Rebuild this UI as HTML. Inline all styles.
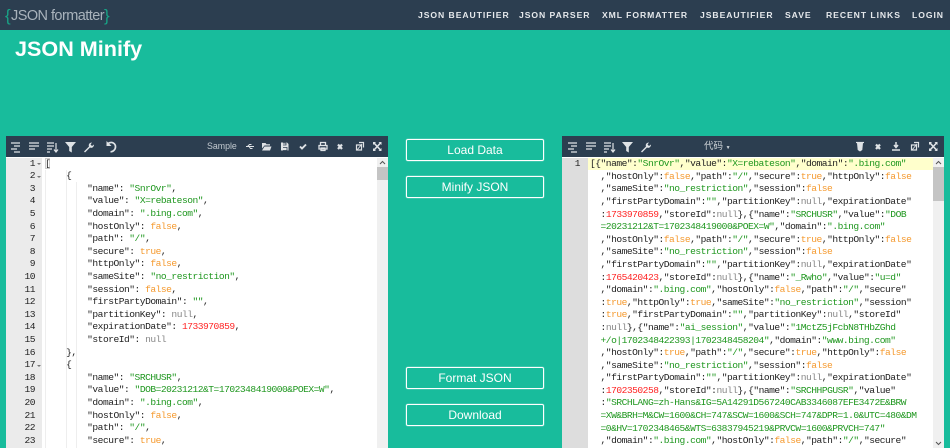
<!DOCTYPE html>
<html><head><meta charset="utf-8">
<style>
html,body{margin:0;padding:0}
body{width:950px;height:448px;overflow:hidden;background:#18bc9c;position:relative;font-family:"Liberation Sans",sans-serif}
.hd{position:absolute;left:0;top:0;width:950px;height:30px;background:#2c3e50}
.nav{position:absolute;top:10px;font-size:8.6px;font-weight:bold;letter-spacing:.95px;color:#e6e9ec;line-height:11px;white-space:nowrap}
.logo{position:absolute;left:11px;top:7px;font-size:14.5px;line-height:18px;color:#a9b3bc;letter-spacing:-.55px;white-space:nowrap}
.br{position:absolute;top:6px;font-size:17px;line-height:20px;color:#18a386;font-weight:normal}
h1{position:absolute;left:15px;top:35px;margin:0;font-size:21.6px;line-height:28px;color:#fff;font-weight:bold}
.btn{position:absolute;left:406px;width:136px;height:20px;border:1px solid #fff;box-shadow:0 0 1px #fff;border-radius:2px;color:#fff;font-size:12px;line-height:20px;text-align:center}
.pn{position:absolute;top:136px;width:382px;height:312px;background:#fff;overflow:hidden}
.tb{position:absolute;left:0;top:0;width:100%;height:21px;background:#2c3e50}
.gt{position:absolute;top:22px;bottom:0;left:0}
.sb{position:absolute;top:22px;bottom:0;right:0;width:11px;background:#f0f0f0}
.th{position:absolute;left:0;width:11px;background:#c4c4c4}
.code{position:absolute;top:21.7px;font:9.6px/12.6px "Liberation Mono",monospace;letter-spacing:-.49px;color:#222;white-space:pre}
.nums{position:absolute;left:0;top:21.7px;text-align:right;font:9.6px/12.6px "Liberation Mono",monospace;letter-spacing:-.49px;color:#222}
i{font-style:normal}
.s{color:#1f971f}.b{color:#f59a2f}.n{color:#f22}.g{color:#888}
svg{position:absolute;top:0;left:0}
.gd{position:absolute;top:22px;bottom:0;width:1px;background:#eee}
.ar{position:absolute;width:0;height:0;border-left:2px solid transparent;border-right:2px solid transparent;border-top:2px solid #777}
</style></head><body>
<div class="hd">
<span class="br" style="left:5px">{</span><div class="logo">JSON formatter</div><span class="br" style="left:104px">}</span>
<span class="nav" style="left:418px">JSON BEAUTIFIER</span>
<span class="nav" style="left:519px">JSON PARSER</span>
<span class="nav" style="left:602px">XML FORMATTER</span>
<span class="nav" style="left:700px">JSBEAUTIFIER</span>
<span class="nav" style="left:785px">SAVE</span>
<span class="nav" style="left:826px">RECENT LINKS</span>
<span class="nav" style="left:912px">LOGIN</span>
</div>
<h1>JSON Minify</h1>
<div class="btn" style="top:139px">Load Data</div>
<div class="btn" style="top:176px">Minify JSON</div>
<div class="btn" style="top:367px">Format JSON</div>
<div class="btn" style="top:404px">Download</div>

<div class="pn" style="left:6px">
<div class="tb">
<svg width="382" height="21" fill="none" stroke="#dfe3e6" stroke-width="1.200">
<path d="M5 7h9M8 10h6M5 13h6M8 16h6"/>
<path d="M23 7h10M23 10h10M23 13h6"/>
<path d="M41 7h7M41 10h7M41 13h5M41 16h3M50 7v9M48 13.500l2 2.500 2-2.500"/>
<path d="M59 6h11l-4.200 5v5.500l-2.600-1.500v-4z" fill="#dfe3e6" stroke="none"/>
<path d="M78 15.500l5-5c-.8-2 .5-4 3-4l-1.500 2 1.500 1.500 2-1.500c0 2.500-2 4-4 3l-5 5z" fill="#dfe3e6" stroke="none"/>
<path d="M102 7.500c4-2.500 7.500 0 7.500 3.300 0 3-2.500 5-5 5" stroke-width="1.700"/><path d="M100.500 5v5h5z" fill="#dfe3e6" stroke="none"/>
<path d="M240 10.500h8M241.500 10.500l2-2h2M243 10.500l1.500 2h2" stroke-width="1"/>
<path d="M256 7h3.500l1 1.300h3.500v1.200h-5.500l-2.500 3zM258.500 10.500h7l-1.500 4h-8z" fill="#dfe3e6" stroke="none"/>
<path d="M275 6.500h6l1.500 1.500v6.500h-7.500z" fill="#dfe3e6" stroke="none"/><path d="M277 7h3v2h-3M277 11.500h4v3h-4" stroke="#2c3e50" stroke-width=".8"/>
<path d="M294 10.500l2 2 4-4" stroke-width="1.900"/>
<path d="M314.500 9V6.500h5V9M313 9.500h8v3.500h-8zM315 12h4v2.500h-4z" stroke-width="1.300"/>
<path d="M332 8.500l4 4.500M336 8.500l-4 4.500" stroke-width="2.200"/>
<path d="M350.500 9h5v5h-5zM353 6.500h4.500v5" stroke-width="1.200"/><path d="M351 14l5-6" stroke-width=".9"/>
<path d="M368 7l6.500 7M374.500 7l-6.500 7" stroke-width="1.600"/><path d="M367 6h3l-3 3zM375.500 6h-3l3 3zM367 15h3l-3-3zM375.500 15h-3l3-3z" fill="#dfe3e6" stroke="none"/>
</svg>
<span style="position:absolute;left:201px;top:5px;font-size:8.8px;line-height:11px;color:#c2c9cf">Sample</span>
</div>
<div class="gt" style="width:36px;background:#ebebeb"></div>
<div class="nums" style="width:29px"><div>1</div><div>2</div><div>3</div><div>4</div><div>5</div><div>6</div><div>7</div><div>8</div><div>9</div><div>10</div><div>11</div><div>12</div><div>13</div><div>14</div><div>15</div><div>16</div><div>17</div><div>18</div><div>19</div><div>20</div><div>21</div><div>22</div><div>23</div></div>
<div class="ar" style="top:27px;left:31px"></div><div class="ar" style="top:40px;left:31px"></div><div class="ar" style="top:229px;left:31px"></div>
<div class="gd" style="left:39px;top:34px"></div><div class="gd" style="left:60px;top:34px"></div><div class="gd" style="left:70px;top:46px"></div>
<div style="position:absolute;left:39px;top:22px;width:5px;height:11px;border:1px solid #ccc;box-sizing:border-box"></div>
<div class="code" style="left:39px">[
    {
        "name": <i class="s">"SnrOvr"</i>,
        "value": <i class="s">"X=rebateson"</i>,
        "domain": <i class="s">".bing.com"</i>,
        "hostOnly": <i class="b">false</i>,
        "path": <i class="s">"/"</i>,
        "secure": <i class="b">true</i>,
        "httpOnly": <i class="b">false</i>,
        "sameSite": <i class="s">"no_restriction"</i>,
        "session": <i class="b">false</i>,
        "firstPartyDomain": <i class="s">""</i>,
        "partitionKey": <i class="g">null</i>,
        "expirationDate": <i class="n">1733970859</i>,
        "storeId": <i class="g">null</i>
    },
    {
        "name": <i class="s">"SRCHUSR"</i>,
        "value": <i class="s">"DOB=20231212&amp;T=1702348419000&amp;POEX=W"</i>,
        "domain": <i class="s">".bing.com"</i>,
        "hostOnly": <i class="b">false</i>,
        "path": <i class="s">"/"</i>,
        "secure": <i class="b">true</i>,</div>
<div class="sb"><div class="th" style="top:9px;height:13px"></div>
<svg width="11" height="9" fill="none" stroke="#555" stroke-width="1"><path d="M3 6l2.500-2.500L8 6"/></svg></div>
</div>

<div class="pn" style="left:562px">
<div class="tb">
<svg width="382" height="21" fill="none" stroke="#dfe3e6" stroke-width="1.200">
<path d="M6 7h9M9 10h6M6 13h6M9 16h6"/>
<path d="M24 7h10M24 10h10M24 13h6"/>
<path d="M42 7h7M42 10h7M42 13h5M42 16h3M51 7v9M49 13.500l2 2.500 2-2.500"/>
<path d="M60 6h11l-4.200 5v5.500l-2.600-1.500v-4z" fill="#dfe3e6" stroke="none"/>
<path d="M79 15.500l5-5c-.8-2 .5-4 3-4l-1.500 2 1.500 1.500 2-1.500c0 2.500-2 4-4 3l-5 5z" fill="#dfe3e6" stroke="none"/>
<path d="M295 7h6l-.7 7-2.300 1.500-2.300-1.500z" fill="#dfe3e6" stroke="none"/><path d="M294 6.500h8" stroke-width="1.200"/>
<path d="M314 8.500l4 4.500M318 8.500l-4 4.500" stroke-width="2.200"/>
<path d="M334 6v5M332 9l2 2.500 2-2.500M330 14h8" stroke-width="1.500"/>
<path d="M349.500 9h5v5h-5zM352 6.500h4.500v5" stroke-width="1.200"/><path d="M350 14l5-6" stroke-width=".9"/>
<path d="M368 7l6.500 7M374.500 7l-6.500 7" stroke-width="1.600"/><path d="M367 6h3l-3 3zM375.500 6h-3l3 3zM367 15h3l-3-3zM375.500 15h-3l3-3z" fill="#dfe3e6" stroke="none"/>
</svg>
<span style="position:absolute;left:142px;top:5px;font-size:9.5px;line-height:11px;color:#cfd4d8;font-family:'Liberation Sans','Noto Sans CJK SC',sans-serif">代码 <span style="font-size:5px">▼</span></span>
</div>
<div class="gt" style="width:26px;background:#ddd"></div>
<div style="position:absolute;left:26px;top:22px;width:345px;height:12px;background:#ffc"></div>
<div class="nums" style="width:18px;top:22.2px">1</div>
<div class="code" style="left:28px;top:22.2px">[{"name":<i class="s">"SnrOvr"</i>,"value":<i class="s">"X=rebateson"</i>,"domain":<i class="s">".bing.com"</i>
  ,"hostOnly":<i class="b">false</i>,"path":<i class="s">"/"</i>,"secure":<i class="b">true</i>,"httpOnly":<i class="b">false</i>
  ,"sameSite":<i class="s">"no_restriction"</i>,"session":<i class="b">false</i>
  ,"firstPartyDomain":<i class="s">""</i>,"partitionKey":<i class="g">null</i>,"expirationDate"
  :<i class="n">1733970859</i>,"storeId":<i class="g">null</i>},{"name":<i class="s">"SRCHUSR"</i>,"value":<i class="s">"DOB
  =20231212&amp;T=1702348419000&amp;POEX=W"</i>,"domain":<i class="s">".bing.com"</i>
  ,"hostOnly":<i class="b">false</i>,"path":<i class="s">"/"</i>,"secure":<i class="b">true</i>,"httpOnly":<i class="b">false</i>
  ,"sameSite":<i class="s">"no_restriction"</i>,"session":<i class="b">false</i>
  ,"firstPartyDomain":<i class="s">""</i>,"partitionKey":<i class="g">null</i>,"expirationDate"
  :<i class="n">1765420423</i>,"storeId":<i class="g">null</i>},{"name":<i class="s">"_Rwho"</i>,"value":<i class="s">"u=d"</i>
  ,"domain":<i class="s">".bing.com"</i>,"hostOnly":<i class="b">false</i>,"path":<i class="s">"/"</i>,"secure"
  :<i class="b">true</i>,"httpOnly":<i class="b">true</i>,"sameSite":<i class="s">"no_restriction"</i>,"session"
  :<i class="b">true</i>,"firstPartyDomain":<i class="s">""</i>,"partitionKey":<i class="g">null</i>,"storeId"
  :<i class="g">null</i>},{"name":<i class="s">"ai_session"</i>,"value":<i class="s">"1MctZ5jFcbN8THbZGhd
  +/o|1702348422393|1702348458204"</i>,"domain":<i class="s">"www.bing.com"</i>
  ,"hostOnly":<i class="b">true</i>,"path":<i class="s">"/"</i>,"secure":<i class="b">true</i>,"httpOnly":<i class="b">false</i>
  ,"sameSite":<i class="s">"no_restriction"</i>,"session":<i class="b">false</i>
  ,"firstPartyDomain":<i class="s">""</i>,"partitionKey":<i class="g">null</i>,"expirationDate"
  :<i class="n">1702350258</i>,"storeId":<i class="g">null</i>},{"name":<i class="s">"SRCHHPGUSR"</i>,"value"
  :<i class="s">"SRCHLANG=zh-Hans&amp;IG=5A14291D567240CAB3346087EFE3472E&amp;BRW
  =XW&amp;BRH=M&amp;CW=1600&amp;CH=747&amp;SCW=1600&amp;SCH=747&amp;DPR=1.0&amp;UTC=480&amp;DM
  =0&amp;HV=1702348465&amp;WTS=63837945219&amp;PRVCW=1600&amp;PRVCH=747"</i>
  ,"domain":<i class="s">".bing.com"</i>,"hostOnly":<i class="b">false</i>,"path":<i class="s">"/"</i>,"secure"</div>
<div class="sb"><div class="th" style="top:9px;height:34px"></div>
<svg width="11" height="9" fill="none" stroke="#555" stroke-width="1"><path d="M3 6l2.500-2.500L8 6"/></svg>
<svg width="11" height="9" style="top:281px" fill="none" stroke="#555" stroke-width="1"><path d="M3 3l2.500 2.500L8 3"/></svg></div>
</div>
</body></html>
